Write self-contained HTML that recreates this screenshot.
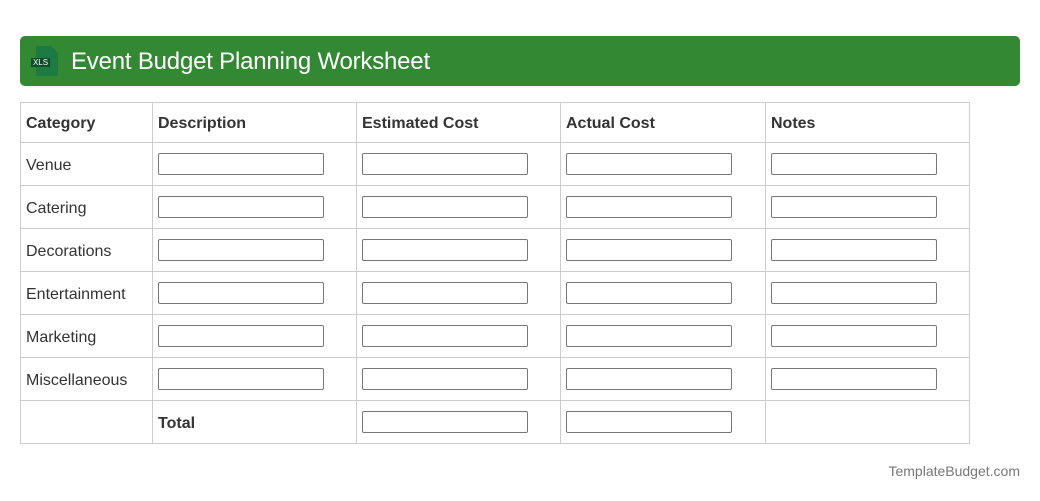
<!DOCTYPE html>
<html><head><style>
body{margin:0;width:1040px;height:501px;background:#fff;font-family:"Liberation Sans",Arial,sans-serif;position:relative;overflow:hidden}
.hdr{position:absolute;left:20px;top:36px;width:1000px;height:50px;background:#328833;border-radius:5px}
.hdr .t{position:absolute;left:51px;top:11px;color:#fff;font-size:24px;line-height:30px;letter-spacing:-0.2px}
.doc{position:absolute;left:16px;top:10px;width:22px;height:30px;background:#1d7a43;clip-path:polygon(0 0,15px 0,22px 7px,22px 30px,0 30px);border-radius:2px}
.band{position:absolute;left:11px;top:22px;width:19px;height:9px;background:#104d2a;color:#fff;font-size:8px;line-height:9px;text-align:center}
.v{position:absolute;background:#ccc;width:1px}
.h{position:absolute;background:#ccc;height:1px;left:20px;width:950px}
.c{position:absolute;font-size:16px;color:#333;line-height:20px;margin-top:1px}
.b{font-weight:bold}
.in{position:absolute;width:164px;height:20px;border:1px solid #777;border-radius:2px}
.f{position:absolute;right:20px;top:463px;font-size:14px;color:#777}
</style></head><body>
<div class="hdr"><div class="doc"></div><div class="band">XLS</div><div class="t">Event Budget Planning Worksheet</div></div>
<div class="v" style="left:20px;top:102px;height:342px"></div>
<div class="v" style="left:152px;top:102px;height:342px"></div>
<div class="v" style="left:356px;top:102px;height:342px"></div>
<div class="v" style="left:560px;top:102px;height:342px"></div>
<div class="v" style="left:765px;top:102px;height:342px"></div>
<div class="v" style="left:969px;top:102px;height:342px"></div>
<div class="h" style="top:102px"></div><div class="h" style="top:142px"></div><div class="h" style="top:185px"></div><div class="h" style="top:228px"></div><div class="h" style="top:271px"></div><div class="h" style="top:314px"></div><div class="h" style="top:357px"></div><div class="h" style="top:400px"></div><div class="h" style="top:443px"></div>
<div class="c b" style="left:26px;top:113px">Category</div>
<div class="c b" style="left:158px;top:113px">Description</div>
<div class="c b" style="left:362px;top:113px">Estimated Cost</div>
<div class="c b" style="left:566px;top:113px">Actual Cost</div>
<div class="c b" style="left:771px;top:113px">Notes</div>
<div class="c" style="left:26px;top:155px">Venue</div>
<div class="c" style="left:26px;top:198px">Catering</div>
<div class="c" style="left:26px;top:241px">Decorations</div>
<div class="c" style="left:26px;top:284px">Entertainment</div>
<div class="c" style="left:26px;top:327px">Marketing</div>
<div class="c" style="left:26px;top:370px">Miscellaneous</div>
<div class="c b" style="left:158px;top:413px">Total</div>
<div id="ins"></div>
<script>
var s='';var ys=[153,196,239,282,325,368];var xs=[158,362,566,771];
ys.forEach(function(y){xs.forEach(function(x){s+='<div class="in" style="left:'+x+'px;top:'+y+'px"></div>';});});
s+='<div class="in" style="left:362px;top:411px"></div><div class="in" style="left:566px;top:411px"></div>';
document.getElementById('ins').innerHTML=s;
</script>
<div class="f">TemplateBudget.com</div>
</body></html>
